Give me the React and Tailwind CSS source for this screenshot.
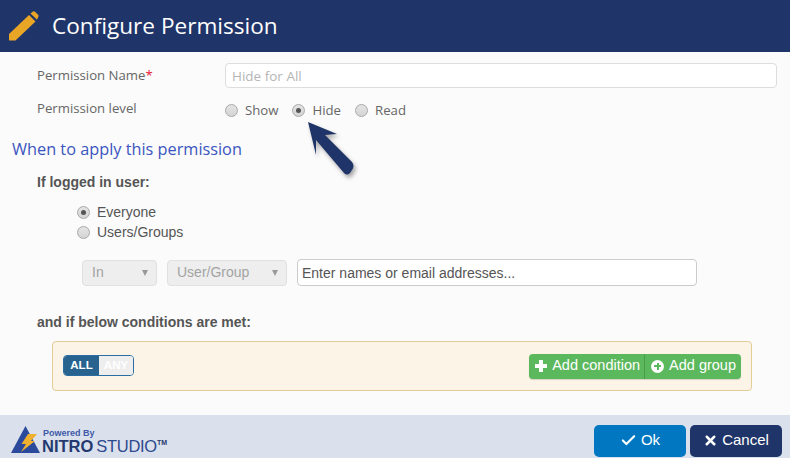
import React from 'react'
import { Check, X } from 'lucide-react'

function Radio({ checked }) {
    return (
        <span className="w-[13px] h-[13px] rounded-full border border-[#a9a9a9] bg-gradient-to-b from-[#e4e4e4] to-[#d4d4d4] flex items-center justify-center shrink-0">
            {checked && <span className="w-[5px] h-[5px] rounded-full bg-[#555]" />}
        </span>
    )
}

function Select({ label, width }) {
    return (
        <div className={`${width} h-[26px] bg-[#eeeeee] border border-[#e0e0e0] rounded-[4px] flex items-center justify-between pl-[9px] pr-[8px] text-[#a3a3a3] text-[14px]`}>
            <span>{label}</span>
            <span className="w-0 h-0 border-x-[3.5px] border-x-transparent border-t-[6px] border-t-[#999]" />
        </div>
    )
}

function Pencil() {
    return (
        <svg width="30" height="30" viewBox="0 0 30 30" className="shrink-0">
            <path d="M0 29.5 L0 23 L20 4 L26.5 10.5 L6.5 29.5 Z" fill="#e8a526" />
            <path d="M21.5 2.5 L24 0.5 Q25 0 26 0.8 L29.3 4 Q30 5 29.2 6 L28 8.8 Z" fill="#e8a526" />
        </svg>
    )
}

function Logo() {
    return (
        <div className="flex items-end h-[36px]">
            <svg width="30" height="30" viewBox="0 0 30 30" className="shrink-0">
                <path d="M14.5 1 L29 28 L0 28 Z" fill="#2b4a9b" />
                <path d="M17 9 L26 9 L20 16 L24 16 L10 27 L15 19 L10.5 19 Z" fill="#efb030" />
            </svg>
            <div className="ml-[1px] flex flex-col">
                <span className="text-[9px] font-bold text-[#3f5aa8] leading-[10px] ml-[1px]">Powered By</span>
                <div className="flex items-start leading-[17px] text-[#24396f]">
                    <span className="text-[16.5px] font-bold">NITRO</span>
                    <span className="text-[16.5px] ml-[3px] tracking-[-0.3px] text-[#2d4a8e]">STUDIO</span>
                    <span className="text-[7px] font-bold leading-[10px]">TM</span>
                </div>
            </div>
        </div>
    )
}

function App() {
    return (
        <div className="relative w-[790px] h-[458px] overflow-hidden flex flex-col bg-[#fbfbfb] font-['Liberation_Sans',sans-serif]">
            <header className="h-[52px] bg-[#1f3569] flex items-center pl-[9px] shrink-0">
                <Pencil />
                <h1 className="ml-[13px] font-['Open_Sans',sans-serif] text-[22.6px] text-white">Configure Permission</h1>
            </header>

            <main className="flex-1 flex flex-col">
                <div className="flex items-center mt-[11px] pl-[37px] pr-[13px]">
                    <label className="w-[188px] font-['Open_Sans',sans-serif] text-[13.2px] text-[#666]">
                        Permission Name<span className="text-[#e8173a]">*</span>
                    </label>
                    <input readOnly placeholder="Hide for All" className="flex-1 h-[25px] bg-white border border-[#dddddd] rounded-[4px] px-[6px] font-['Open_Sans',sans-serif] text-[13.5px] placeholder:text-[#b5b5b5]" />
                </div>

                <div className="flex items-center mt-[10px] pl-[37px] h-[25px]">
                    <label className="w-[188px] font-['Open_Sans',sans-serif] text-[13.2px] text-[#666] -mt-[4px]">Permission level</label>
                    <div className="flex items-center font-['Open_Sans',sans-serif] text-[13.2px] text-[#666]">
                        <Radio />
                        <span className="ml-[7px]">Show</span>
                        <span className="ml-[14px]"><Radio checked /></span>
                        <span className="ml-[7px]">Hide</span>
                        <span className="ml-[14px]"><Radio /></span>
                        <span className="ml-[7px]">Read</span>
                    </div>
                </div>

                <h2 className="mt-[15px] ml-[12px] font-['Open_Sans',sans-serif] text-[16.3px] leading-[22px] text-[#3a55c0]">When to apply this permission</h2>

                <div className="mt-[14px] ml-[37px] text-[14px] leading-[16px] font-bold text-[#555]">If logged in user:</div>

                <div className="mt-[14px] ml-[77px] flex flex-col gap-[4px] text-[14px] text-[#555]">
                    <div className="flex items-center gap-[7px] h-[16px]"><Radio checked />Everyone</div>
                    <div className="flex items-center gap-[7px] h-[16px]"><Radio />Users/Groups</div>
                </div>

                <div className="mt-[19px] ml-[82px] flex items-center gap-[10px]">
                    <Select label="In" width="w-[75px]" />
                    <Select label="User/Group" width="w-[120px]" />
                    <input readOnly placeholder="Enter names or email addresses..." className="w-[400px] h-[27px] bg-white border border-[#cccccc] rounded-[4px] px-[4px] text-[14px] placeholder:text-[#555]" />
                </div>

                <div className="mt-[28px] ml-[37px] text-[14px] leading-[16px] font-bold text-[#555]">and if below conditions are met:</div>

                <div className="mt-[11px] ml-[52px] w-[700px] h-[50px] bg-[#fcf4e6] border border-[#e2cd97] rounded-[4px] flex items-center justify-between pl-[10px] pr-[10px]">
                    <div className="flex w-[71px] h-[21px] rounded-[4px] border border-[#2b6ca3] overflow-hidden text-[11.5px] font-bold text-white -mt-[1px]">
                        <span className="w-[35px] bg-[#28628f] flex items-center justify-center">ALL</span>
                        <span className="flex-1 bg-[#eeeeee] flex items-center justify-center">ANY</span>
                    </div>
                    <div className="flex h-[25px] rounded-[4px] bg-[#5cb85c] text-white text-[14.5px] shadow-[0_1px_1px_rgba(0,0,0,0.15)]">
                        <button className="flex items-center pl-[6px] pr-[4px] border-r border-[#4a9e4a]">
                            <span className="relative w-[12px] h-[12px] mr-[5px]">
                                <span className="absolute left-0 top-[4px] w-[12px] h-[4px] bg-white" />
                                <span className="absolute left-[4px] top-0 w-[4px] h-[12px] bg-white" />
                            </span>
                            Add condition
                        </button>
                        <button className="flex items-center pl-[6px] pr-[5px]">
                            <span className="w-[13px] h-[13px] rounded-full bg-white mr-[5px] relative">
                                <span className="absolute left-[3px] top-[5.5px] w-[7px] h-[2px] bg-[#5cb85c]" />
                                <span className="absolute left-[5.5px] top-[3px] w-[2px] h-[7px] bg-[#5cb85c]" />
                            </span>
                            Add group
                        </button>
                    </div>
                </div>
            </main>

            <footer className="h-[43px] bg-[#dae0ec] shrink-0 flex items-center justify-between pl-[11px] pr-[8px]">
                <Logo />
                <div className="flex gap-[4px] mt-[8px] text-white text-[15px]">
                    <button className="w-[92px] h-[32px] bg-[#0077c0] rounded-[5px] flex items-center justify-center gap-[4px]">
                        <Check size={17} strokeWidth={3} />Ok
                    </button>
                    <button className="w-[92px] h-[32px] bg-[#1f3569] rounded-[5px] flex items-center justify-center gap-[4px]">
                        <X size={15} strokeWidth={4} />Cancel
                    </button>
                </div>
            </footer>

            {/* pointer over the Hide radio */}
            <svg width="62" height="64" viewBox="0 0 62 64" className="absolute left-[305px] top-[120px] drop-shadow-[2px_3px_2px_rgba(0,0,0,0.35)]">
                <path d="M3 2 L32 14 L20 15 L47 42 Q50 46 47 50 L45 53 Q42 56 39 53 L11 20 L11 35 Z" fill="#1f3569" />
            </svg>
        </div>
    )
}

export default App
